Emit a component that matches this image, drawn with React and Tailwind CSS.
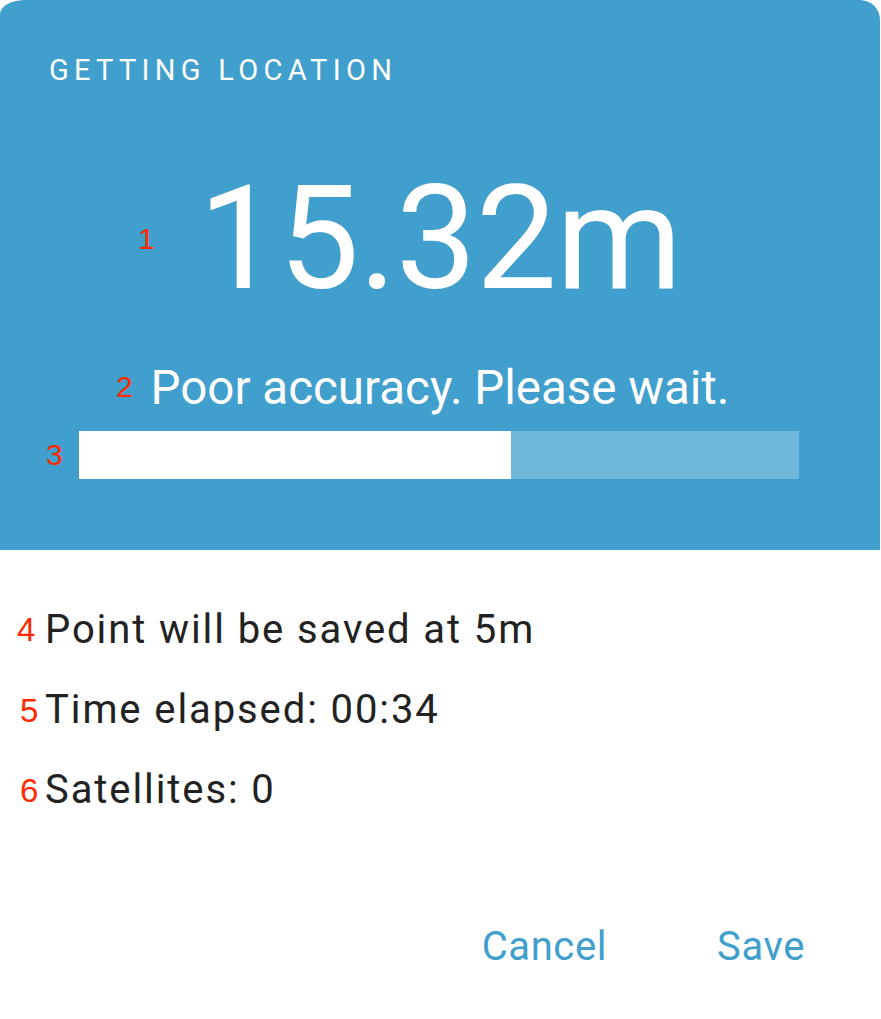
export default function App() {
  const red = "absolute leading-none text-[#ff2a00] font-['Liberation_Sans',Arial,sans-serif]";
  return (
    <div className="relative w-[881px] h-[1019px] bg-white font-['Roboto',sans-serif] overflow-hidden">
      <div className="w-[880px] h-[550px] bg-[#409fcc] rounded-tl-[26px_14px] rounded-tr-[20px] flex flex-col items-center">
        <div className="self-start pl-[49px] pt-[56px] text-[29px] leading-none tracking-[5.3px] text-white">
          GETTING LOCATION
        </div>
        <div className="mt-[82px] text-[144px] leading-none tracking-[-0.8px] text-white">15.32m</div>
        <div className="mt-[54px] text-[47.5px] leading-none text-white">Poor accuracy. Please wait.</div>
        <div className="self-start ml-[79px] mt-[18px] w-[720px] h-[48px] bg-[#6fb8da] flex">
          <div className="w-[432px] h-full bg-white" />
        </div>
      </div>

      <div className="pl-[45px] pt-[40px] text-[40px] leading-[80px] tracking-[1.9px] text-[#222222]">
        <div>Point will be saved at 5m</div>
        <div>Time elapsed: 00:34</div>
        <div>Satellites: 0</div>
      </div>

      <div className="mt-[97px] flex justify-end pr-[76px] gap-[110px] text-[40px] leading-none tracking-[0.6px] text-[#409fcc]">
        <span>Cancel</span>
        <span>Save</span>
      </div>

      <span className={red + " text-[30px] left-[138px] top-[224px]"}>1</span>
      <span className={red + " text-[30px] left-[116px] top-[372px]"}>2</span>
      <span className={red + " text-[30px] left-[46px] top-[440px]"}>3</span>
      <span className={red + " text-[33px] left-[17px] top-[613px]"}>4</span>
      <span className={red + " text-[33px] left-[20px] top-[694px]"}>5</span>
      <span className={red + " text-[33px] left-[20px] top-[774px]"}>6</span>
    </div>
  );
}
